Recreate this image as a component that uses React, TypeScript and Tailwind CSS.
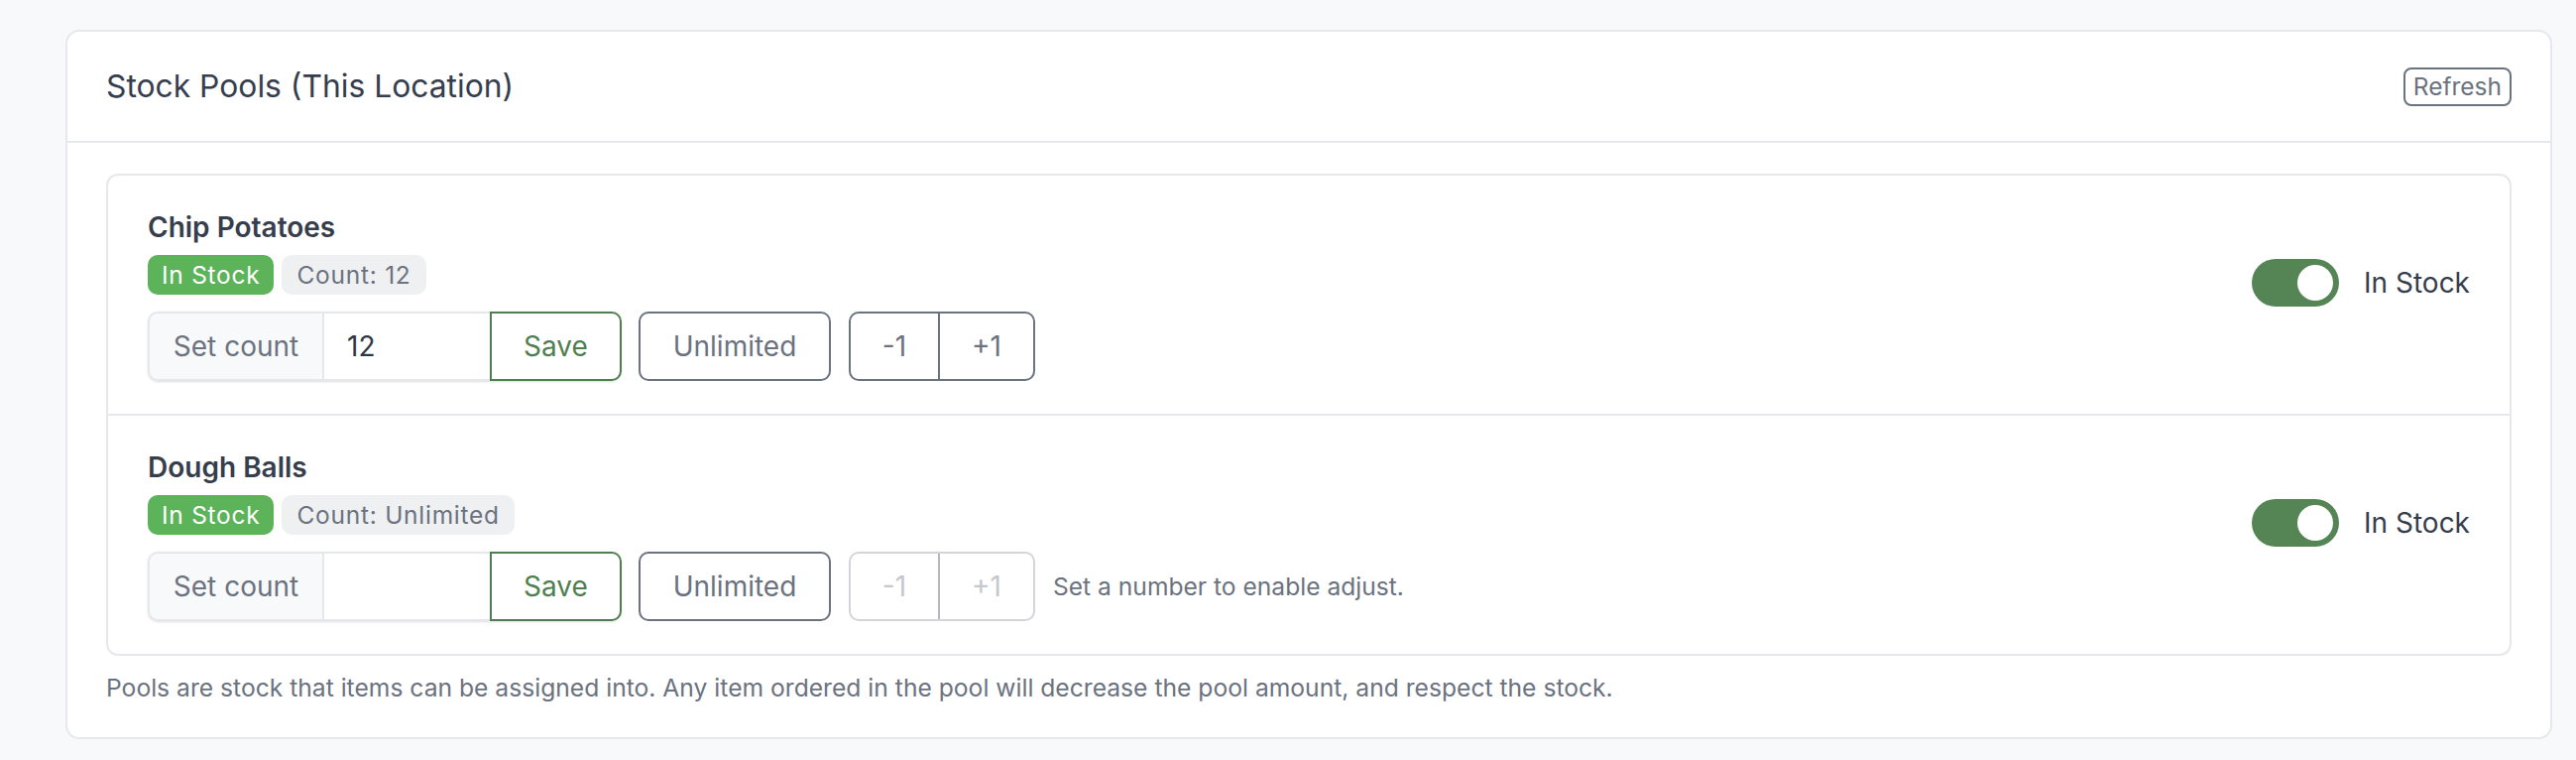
import React from "react";

type Pool = {
  name: string;
  count: number | null;
};

const pools: Pool[] = [
  { name: "Chip Potatoes", count: 12 },
  { name: "Dough Balls", count: null },
];

const Toggle = () => (
  <div className="flex h-[48px] w-[88px] items-center justify-end rounded-full bg-[#558455] px-[6px]">
    <span className="h-[36px] w-[36px] rounded-full bg-white" />
  </div>
);

const PoolRow = ({ pool, last }: { pool: Pool; last: boolean }) => {
  const limited = pool.count !== null;
  return (
    <div
      className={`flex items-center justify-between px-[40px] pt-[31px] pb-[33px] ${
        last ? "" : "border-b-2 border-[#e7e8ec]"
      }`}
    >
      <div className="flex flex-col">
        <div className="text-[28px] leading-[42px] font-semibold text-[#363e4d]">{pool.name}</div>
        <div className="mt-[7px] flex gap-[8px]">
          <span className="flex h-[40px] items-center rounded-[10px] bg-[#5cb35a] px-[14px] text-[24.5px] tracking-[0.03em] text-white">
            In Stock
          </span>
          <span className="flex h-[40px] items-center rounded-[10px] bg-[#eff0f2] px-[15px] text-[24.5px] tracking-[0.03em] text-[#6b7280]">
            Count: {limited ? pool.count : "Unlimited"}
          </span>
        </div>
        <div className="mt-[17px] flex items-center">
          <div className="flex h-[70px] rounded-[10px] shadow-sm">
            <div className="flex w-[176px] items-center justify-center rounded-l-[10px] border-2 border-r-0 border-[#e6e7eb] bg-[#f8f9fa] text-[28px] text-[#6b7280]">
              Set count
            </div>
            <div className="flex w-[169px] items-center border-y-2 border-l-2 border-[#e6e7eb] bg-white pl-[23px] text-[28px] text-[#2f3747]">
              {limited ? pool.count : ""}
            </div>
            <button className="w-[133px] rounded-r-[10px] border-2 border-[#4f7f51] bg-white text-[28px] text-[#4f7f51]">
              Save
            </button>
          </div>
          <button className="ml-[17px] h-[70px] w-[194px] rounded-[10px] border-2 border-[#6b7280] bg-white text-[28px] text-[#6b7280]">
            Unlimited
          </button>
          <div
            className={`ml-[18px] flex h-[70px] rounded-[10px] border-2 ${
              limited ? "border-[#6b7280] text-[#6b7280]" : "border-[#d3d5da] text-[#c5c8ce]"
            }`}
          >
            <button className="w-[88px] text-[28px]">-1</button>
            <span className={`w-[2px] ${limited ? "bg-[#6b7280]" : "bg-[#b4b7bd]"}`} />
            <button className="w-[94px] text-[28px]">+1</button>
          </div>
          {!limited && (
            <span className="ml-[18px] text-[24.6px] text-[#6b7280]">Set a number to enable adjust.</span>
          )}
        </div>
      </div>
      <div className="flex items-center gap-[25px] pb-[22px]">
        <Toggle />
        <span className="text-[28px] text-[#363e4d]">In Stock</span>
      </div>
    </div>
  );
};

export default function App() {
  return (
    <div
      className="min-h-screen bg-[#f8f9fb] pt-[30px] pl-[66px]"
      style={{ fontFamily: "Inter, 'Noto Sans', sans-serif" }}
    >
      <div className="w-[2508px] rounded-[14px] border-2 border-[#e7e8ec] bg-white">
        <div className="flex h-[112px] items-center justify-between border-b-2 border-[#e7e8ec] px-[39px]">
          <h2 className="text-[31.8px] font-normal text-[#363e4d]">Stock Pools (This Location)</h2>
          <button className="flex h-[39px] items-center rounded-[8px] border-2 border-[#6b7280] px-[8px] text-[24.5px] text-[#6b7280]">
            Refresh
          </button>
        </div>
        <div className="px-[39px] pt-[31px] pb-[32px]">
          <div className="rounded-[12px] border-2 border-[#e7e8ec]">
            {pools.map((p, i) => (
              <PoolRow key={p.name} pool={p} last={i === pools.length - 1} />
            ))}
          </div>
          <p className="mt-[15px] text-[24.65px] leading-[35px] text-[#6b7280]">
            Pools are stock that items can be assigned into. Any item ordered in the pool will decrease the pool
            amount, and respect the stock.
          </p>
        </div>
      </div>
    </div>
  );
}
